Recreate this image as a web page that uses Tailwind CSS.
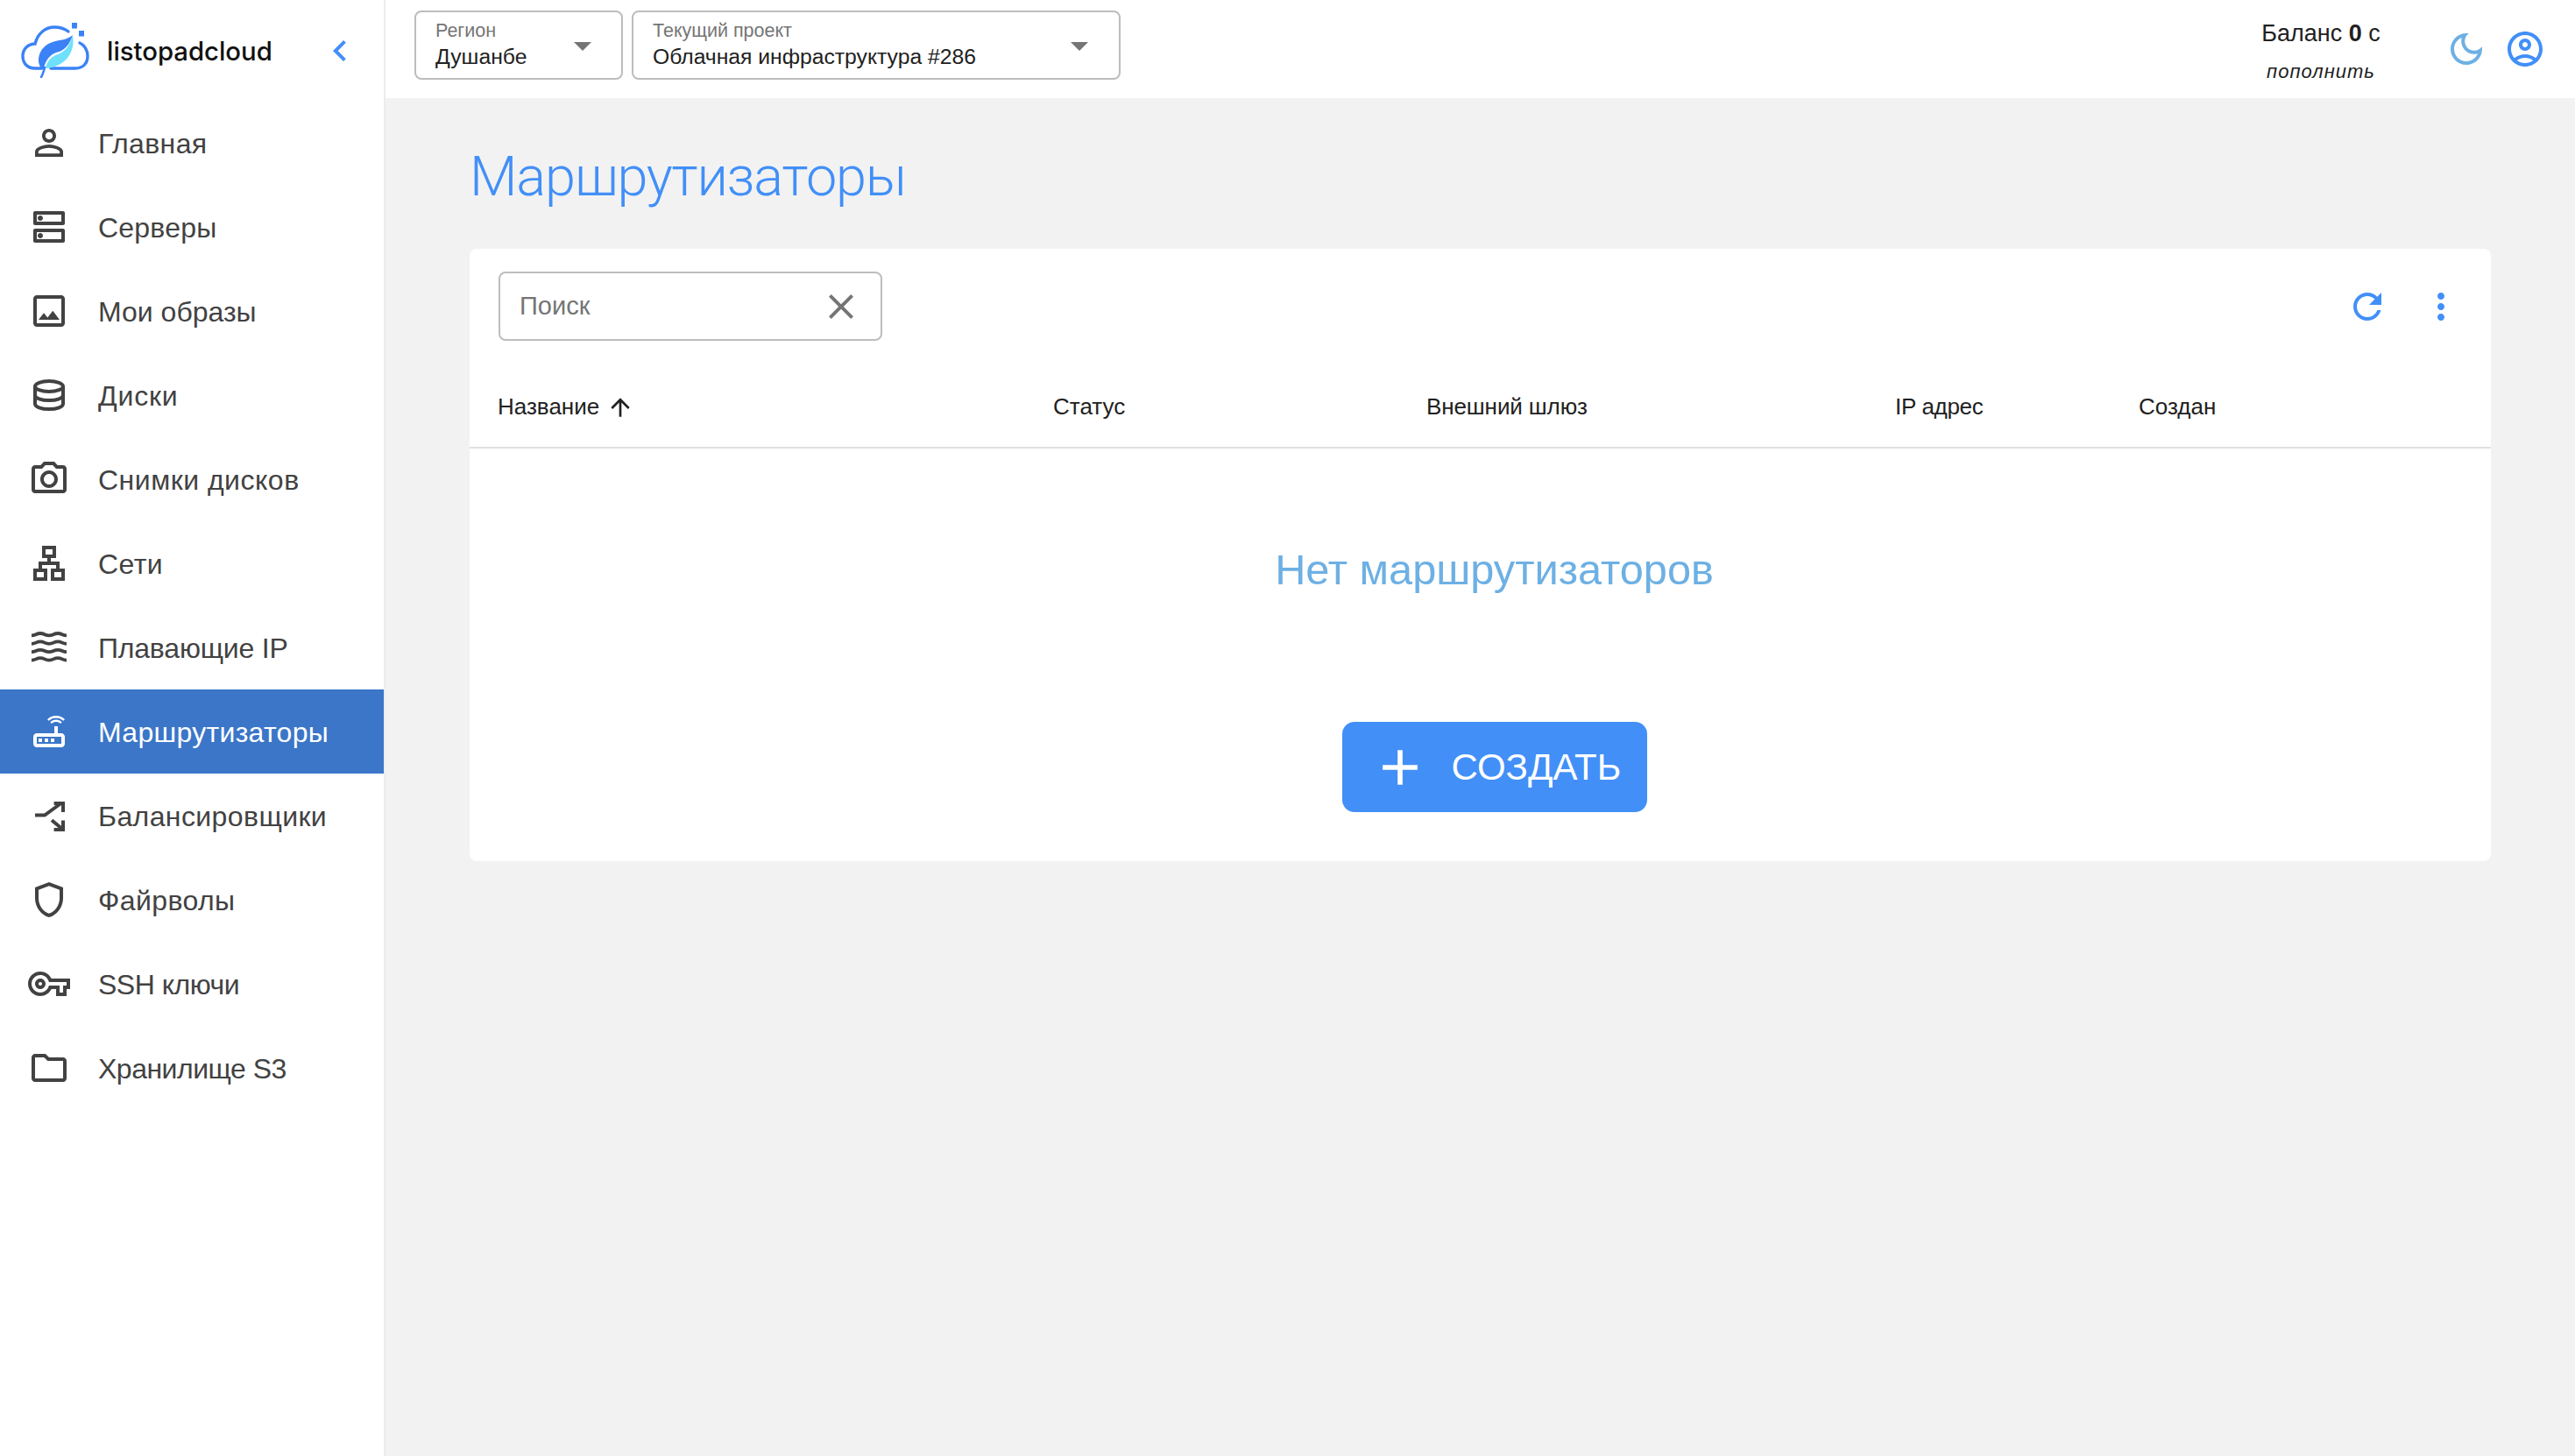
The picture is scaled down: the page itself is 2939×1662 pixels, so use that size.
<!DOCTYPE html>
<html lang="ru">
<head>
    <meta charset="UTF-8">
    <title>Маршрутизаторы - listopadcloud</title>
    <script src="https://cdn.jsdelivr.net/npm/@tailwindcss/browser@4"></script>
</head>
<body class="bg-[#f2f2f2] text-[#212121] font-['Liberation_Sans',sans-serif]">
<div class="flex h-[1662px] w-[2939px] overflow-hidden">

    <!-- Sidebar -->
    <aside class="w-[440px] shrink-0 bg-white border-r-2 border-[#ececec]">
        <div class="flex items-center h-[115px] pl-[24px]">
            <svg class="w-[78px] h-[63px] shrink-0" viewBox="0 0 78 63" fill="none">
                <path d="M24 52H16C7 52 2 46 2 38C2 30 8 24 16 24C19 12 28 5 38 5C45 5 50 7 54 10" stroke="#3b82f6" stroke-width="3.4" stroke-linecap="round"/>
                <path d="M67 23C72 25 76 31 76 38C76 47 70 52 62 52H34" stroke="#3b82f6" stroke-width="3.4" stroke-linecap="round"/>
                <path d="M23 52C16 42 22 26 36 22C45 19 52 20 59 14C56 24 50 32 40 34C34 36 28 42 26 52Z" fill="#3b82f6"/>
                <path d="M59 14C62 30 54 50 28 52C30 42 36 38 42 36C50 33 56 26 59 14Z" fill="#6fe0fb"/>
                <path d="M27 51C26 55 25 59 23 62" stroke="#3b82f6" stroke-width="2.6" stroke-linecap="round"/>
                <rect x="58" y="0" width="6" height="6.500" fill="#3b82f6"/>
                <rect x="66" y="9" width="6" height="6.500" fill="#3b82f6"/>
            </svg>
            <span class="ml-[20px] pt-[2px] text-[29.300px] font-medium text-[#111] font-['Inter',sans-serif]">listopadcloud</span>
            <svg class="w-[48px] h-[48px] ml-auto mr-[26px] fill-[#428ff8]" viewBox="0 0 24 24"><path d="M15.410 7.410 14 6l-6 6 6 6 1.410-1.410L10.830 12z"/></svg>
        </div>
        <nav class="flex flex-col text-[32px] text-[#424242] tracking-[0.4px]">
            <a class="flex items-center h-[96px] pl-[32px] gap-[32px]"><svg class="w-[48px] h-[48px] fill-current" viewBox="0 0 24 24"><path d="M12 5.900c1.160 0 2.100.94 2.100 2.100s-.94 2.100-2.100 2.100S9.900 9.160 9.900 8s.94-2.100 2.100-2.100m0 9c2.970 0 6.100 1.460 6.100 2.100v1.100H5.900V17c0-.64 3.130-2.100 6.100-2.100M12 4C9.790 4 8 5.790 8 8s1.790 4 4 4 4-1.790 4-4-1.790-4-4-4zm0 9c-2.670 0-8 1.340-8 4v3h16v-3c0-2.660-5.330-4-8-4z"/></svg><span class="pt-[2px]">Главная</span></a>
            <a class="flex items-center h-[96px] pl-[32px] gap-[32px]"><svg class="w-[48px] h-[48px] fill-current" viewBox="0 0 24 24"><path d="M19 15v4H5v-4h14m1-2H4c-.55 0-1 .45-1 1v6c0 .55.45 1 1 1h16c.55 0 1-.45 1-1v-6c0-.55-.45-1-1-1zM7 18.500c-.82 0-1.500-.67-1.500-1.500s.68-1.500 1.500-1.500 1.500.67 1.500 1.500-.67 1.500-1.500 1.500zM19 5v4H5V5h14m1-2H4c-.55 0-1 .45-1 1v6c0 .55.45 1 1 1h16c.55 0 1-.45 1-1v-6c0-.55-.45-1-1-1zM7 8.500c-.82 0-1.500-.67-1.500-1.500S6.180 5.500 7 5.500s1.500.68 1.500 1.500S7.830 8.500 7 8.500z"/></svg><span class="pt-[2px] tracking-[0.2px]">Серверы</span></a>
            <a class="flex items-center h-[96px] pl-[32px] gap-[32px]"><svg class="w-[48px] h-[48px] fill-current" viewBox="0 0 24 24"><path d="M19 5v14H5V5h14m0-2H5c-1.100 0-2 .9-2 2v14c0 1.100.9 2 2 2h14c1.100 0 2-.9 2-2V5c0-1.100-.9-2-2-2zm-4.860 8.860-3 3.870L9 13.140 6 17h12l-3.860-5.140z"/></svg><span class="pt-[2px] tracking-normal">Мои образы</span></a>
            <a class="flex items-center h-[96px] pl-[32px] gap-[32px]"><svg class="w-[48px] h-[48px] fill-none stroke-current" stroke-width="2" viewBox="0 0 24 24"><ellipse cx="12" cy="7" rx="8" ry="3"/><path d="M4 7v10c0 1.700 3.600 3 8 3s8-1.300 8-3V7M4 12c0 1.700 3.600 3 8 3s8-1.300 8-3"/></svg><span class="pt-[2px] tracking-[0.8px]">Диски</span></a>
            <a class="flex items-center h-[96px] pl-[32px] gap-[32px]"><svg class="w-[48px] h-[48px] fill-current" viewBox="0 0 24 24"><path d="M14.120 4l1.830 2H20v12H4V6h4.050l1.830-2h4.240M15 2H9L7.170 4H4c-1.100 0-2 .9-2 2v12c0 1.100.9 2 2 2h16c1.100 0 2-.9 2-2V6c0-1.100-.9-2-2-2h-3.170L15 2zm-3 7c1.650 0 3 1.350 3 3s-1.350 3-3 3-3-1.350-3-3 1.350-3 3-3m0-2c-2.760 0-5 2.240-5 5s2.240 5 5 5 5-2.240 5-5-2.240-5-5-5z"/></svg><span class="pt-[2px] tracking-[0.5px]">Снимки дисков</span></a>
            <a class="flex items-center h-[96px] pl-[32px] gap-[32px]"><svg class="w-[48px] h-[48px] fill-current" viewBox="0 0 24 24"><path d="M13 22h8v-7h-3v-4h-5V9h3V2H8v7h3v2H6v4H3v7h8v-7H8v-2h8v2h-3v7zM10 7V4h4v3h-4zM5 20v-3h4v3H5zm14-3v3h-4v-3h4z"/></svg><span class="pt-[2px]">Сети</span></a>
            <a class="flex items-center h-[96px] pl-[32px] gap-[32px]"><svg class="w-[48px] h-[48px] fill-none stroke-current" stroke-width="1.900" viewBox="0 0 24 24"><path d="M2 5.200c2.500 0 2.500-1.200 5-1.200s2.500 1.200 5 1.200 2.500-1.200 5-1.200 2.500 1.200 5 1.200M2 9.900c2.500 0 2.500-1.200 5-1.200s2.500 1.200 5 1.200 2.500-1.200 5-1.200 2.500 1.200 5 1.200M2 14.600c2.500 0 2.500-1.200 5-1.200s2.500 1.200 5 1.200 2.500-1.200 5-1.200 2.500 1.200 5 1.200M2 19.300c2.500 0 2.500-1.200 5-1.200s2.500 1.200 5 1.200 2.500-1.200 5-1.200 2.500 1.200 5 1.200"/></svg><span class="pt-[2px] tracking-[-0.2px]">Плавающие IP</span></a>
            <a class="flex items-center h-[96px] pl-[32px] gap-[32px] bg-[#3b76c8] text-white"><svg class="w-[48px] h-[48px] fill-current" viewBox="0 0 24 24"><path d="M20.200 5.900l.8-.8C19.600 3.700 17.800 3 16 3s-3.600.7-5 2.100l.8.8C13 4.800 14.500 4.200 16 4.200s3 .6 4.200 1.700zm-.9.8c-.9-.9-2.100-1.400-3.300-1.400s-2.400.5-3.300 1.400l.8.8c.7-.7 1.600-1 2.500-1 .9 0 1.800.3 2.500 1l.8-.8zM19 13h-2V9h-2v4H5c-1.100 0-2 .9-2 2v4c0 1.100.9 2 2 2h14c1.100 0 2-.9 2-2v-4c0-1.100-.9-2-2-2zm0 6H5v-4h14v4zM6 16h2v2H6zm3.500 0h2v2h-2zm3.500 0h2v2h-2z"/></svg><span class="pt-[2px] tracking-[0.3px]">Маршрутизаторы</span></a>
            <a class="flex items-center h-[96px] pl-[32px] gap-[32px]"><svg class="w-[48px] h-[48px] fill-none stroke-current" stroke-width="2" viewBox="0 0 24 24"><path d="M4 11.800h5.500L18.800 5M14.800 5H20v5M13.500 14.600l5.300 4.400M20 14.800V20h-5.200"/></svg><span class="pt-[2px]">Балансировщики</span></a>
            <a class="flex items-center h-[96px] pl-[32px] gap-[32px]"><svg class="w-[48px] h-[48px] fill-current" viewBox="0 0 24 24"><path d="M12 2 4 5v6.090c0 5.050 3.410 9.760 8 10.910 4.590-1.150 8-5.860 8-10.910V5l-8-3zm6 9.090c0 4-2.550 7.700-6 8.830-3.450-1.130-6-4.820-6-8.830v-4.700l6-2.250 6 2.250v4.700z"/></svg><span class="pt-[2px]">Файрволы</span></a>
            <a class="flex items-center h-[96px] pl-[32px] gap-[32px]"><svg class="w-[48px] h-[48px] fill-current" viewBox="0 0 24 24"><path d="M22 19h-6v-4h-2.680c-1.140 2.420-3.600 4-6.320 4-3.860 0-7-3.140-7-7s3.140-7 7-7c2.720 0 5.170 1.580 6.320 4H24v6h-2v4zm-4-2h2v-4h2v-2H11.960l-.23-.67C11.040 8.340 9.140 7 7 7c-2.760 0-5 2.240-5 5s2.240 5 5 5c2.140 0 4.040-1.340 4.730-3.330l.23-.67H18v4zM7 15c-1.650 0-3-1.350-3-3s1.350-3 3-3 3 1.350 3 3-1.350 3-3 3zm0-4c-.55 0-1 .45-1 1s.45 1 1 1 1-.45 1-1-.45-1-1-1z"/></svg><span class="pt-[2px] tracking-[-0.5px]">SSH ключи</span></a>
            <a class="flex items-center h-[96px] pl-[32px] gap-[32px]"><svg class="w-[48px] h-[48px] fill-current" viewBox="0 0 24 24"><path d="M9.170 6l2 2H20v10H4V6h5.170M10 4H4c-1.100 0-1.990.9-1.990 2L2 18c0 1.100.9 2 2 2h16c1.100 0 2-.9 2-2V8c0-1.100-.9-2-2-2h-8l-2-2z"/></svg><span class="pt-[2px] tracking-[-0.5px]">Хранилище S3</span></a>
        </nav>
    </aside>

    <div class="flex-1 flex flex-col min-w-0">
        <!-- Top bar -->
        <header class="flex h-[112px] bg-white items-center pl-[33px] pr-[33px]">
            <div class="self-start mt-3 flex gap-[10px]">
                <div class="relative w-[238px] h-[79px] border-2 border-[#bdbdbd] rounded-lg pl-[22px] pt-[9px]">
                    <div class="text-[21.500px] leading-[24px] text-[#757575]">Регион</div>
                    <div class="text-[24.700px] leading-[30px] mt-[3px]">Душанбе</div>
                    <svg class="absolute right-[20px] top-[14px] w-[48px] h-[48px] fill-[#757575]" viewBox="0 0 24 24"><path d="M7 10l5 5 5-5z"/></svg>
                </div>
                <div class="relative w-[558px] h-[79px] border-2 border-[#bdbdbd] rounded-lg pl-[22px] pt-[9px]">
                    <div class="text-[21.500px] leading-[24px] text-[#757575]">Текущий проект</div>
                    <div class="text-[24.700px] leading-[30px] mt-[3px]">Облачная инфраструктура #286</div>
                    <svg class="absolute right-[21px] top-[14px] w-[48px] h-[48px] fill-[#757575]" viewBox="0 0 24 24"><path d="M7 10l5 5 5-5z"/></svg>
                </div>
            </div>
            <div class="ml-auto w-[140px] text-center mr-[72px] pt-[3px]">
                <div class="text-[27px] leading-[36px]">Баланс <b>0</b> с</div>
                <div class="text-[22px] leading-[28px] mt-[12px] italic tracking-[1px]">пополнить</div>
            </div>
            <svg class="w-[48px] h-[48px] fill-[#6db0e4]" viewBox="0 0 24 24"><path d="M9.370 5.510C9.190 6.150 9.100 6.820 9.100 7.500c0 4.080 3.320 7.400 7.400 7.400.68 0 1.350-.09 1.990-.27C17.450 17.190 14.930 19 12 19c-3.860 0-7-3.140-7-7C5 9.070 6.810 6.550 9.370 5.510zM12 3c-4.970 0-9 4.030-9 9s4.030 9 9 9 9-4.030 9-9c0-.46-.04-.92-.1-1.360-.98 1.370-2.580 2.260-4.400 2.260-2.980 0-5.400-2.420-5.400-5.400 0-1.810.89-3.420 2.260-4.400C12.920 3.040 12.460 3 12 3z"/></svg>
            <svg class="w-[48px] h-[48px] ml-[19px] fill-[#428ff8]" viewBox="0 0 24 24"><path d="M12 2C6.480 2 2 6.480 2 12s4.480 10 10 10 10-4.480 10-10S17.520 2 12 2zM7.350 18.500C8.660 17.560 10.260 17 12 17s3.340.56 4.650 1.500c-1.310.94-2.910 1.500-4.650 1.500s-3.340-.56-4.650-1.500zm10.790-1.380C16.450 15.800 14.320 15 12 15s-4.450.8-6.140 2.120C4.700 15.730 4 13.950 4 12c0-4.420 3.580-8 8-8s8 3.580 8 8c0 1.950-.7 3.730-1.860 5.120zM12 6c-1.930 0-3.500 1.570-3.500 3.500S10.070 13 12 13s3.500-1.570 3.500-3.500S13.930 6 12 6zm0 5c-.83 0-1.500-.67-1.500-1.500S11.170 8 12 8s1.500.67 1.500 1.500S12.830 11 12 11z"/></svg>
        </header>

        <!-- Content -->
        <main class="px-[96px] pt-[42px]">
            <h1 class="text-[63px] leading-[96px] font-light font-['Roboto',sans-serif] text-[#428ff8] tracking-[-1.200px]">Маршрутизаторы</h1>

            <section class="mt-[34px] bg-white rounded-lg h-[699px] flex flex-col">
                <div class="flex items-center h-[134px] pl-[33px] pb-[3px]">
                    <div class="flex items-center w-[438px] h-[79px] border-2 border-[#bdbdbd] rounded-lg pl-[22px] pr-[21px]">
                        <span class="text-[29px] text-[#757575]">Поиск</span>
                        <svg class="ml-auto w-[48px] h-[48px] fill-[#757575]" viewBox="0 0 24 24"><path d="M19 6.410 17.590 5 12 10.590 6.410 5 5 6.410 10.590 12 5 17.590 6.410 19 12 13.410 17.590 19 19 17.590 13.410 12z"/></svg>
                    </div>
                    <svg class="ml-auto w-[48px] h-[48px] fill-[#428ff8]" viewBox="0 0 24 24"><path d="M17.650 6.350C16.200 4.900 14.210 4 12 4c-4.420 0-7.990 3.580-7.990 8s3.570 8 7.990 8c3.730 0 6.840-2.550 7.730-6h-2.080c-.82 2.330-3.040 4-5.650 4-3.310 0-6-2.690-6-6s2.690-6 6-6c1.660 0 3.140.69 4.220 1.780L13 11h7V4l-2.350 2.350z"/></svg>
                    <svg class="ml-[36px] mr-[33px] w-[48px] h-[48px] fill-[#428ff8]" viewBox="0 0 24 24"><path d="M12 8c1.100 0 2-.9 2-2s-.9-2-2-2-2 .9-2 2 .9 2 2 2zm0 2c-1.100 0-2 .9-2 2s.9 2 2 2 2-.9 2-2-.9-2-2-2zm0 6c-1.100 0-2 .9-2 2s.9 2 2 2 2-.9 2-2-.9-2-2-2z"/></svg>
                </div>
                <div class="grid grid-cols-[634px_426px_535px_278px_1fr] items-center h-[94px] pl-[32px] pt-[1px] border-b-2 border-[#e0e0e0] text-[26px]">
                    <div class="flex items-center">Название<svg class="ml-[8px] w-[32px] h-[32px] fill-[#212121]" viewBox="0 0 24 24"><path d="m4 12 1.410 1.410L11 7.830V20h2V7.830l5.580 5.590L20 12l-8-8-8 8z"/></svg></div>
                    <div>Статус</div>
                    <div class="tracking-[-0.100px]">Внешний шлюз</div>
                    <div class="tracking-[-0.300px]">IP адрес</div>
                    <div>Создан</div>
                </div>
                <div class="flex-1 flex flex-col items-center pt-[106px] pl-[32px]">
                    <p class="text-[48.700px] leading-[64px] text-[#6db0e4]">Нет маршрутизаторов</p>
                    <button class="mt-[142px] flex items-center w-[348px] h-[103px] rounded-[14px] bg-[#428ff8] text-white text-[42px] pl-[32px]">
                        <svg class="w-[68px] h-[68px] fill-current" viewBox="0 0 24 24"><path d="M19 13h-6v6h-2v-6H5v-2h6V5h2v6h6v2z"/></svg>
                        <span class="ml-[25px]">СОЗДАТЬ</span>
                    </button>
                </div>
            </section>
        </main>
    </div>
</div>
</body>
</html>
